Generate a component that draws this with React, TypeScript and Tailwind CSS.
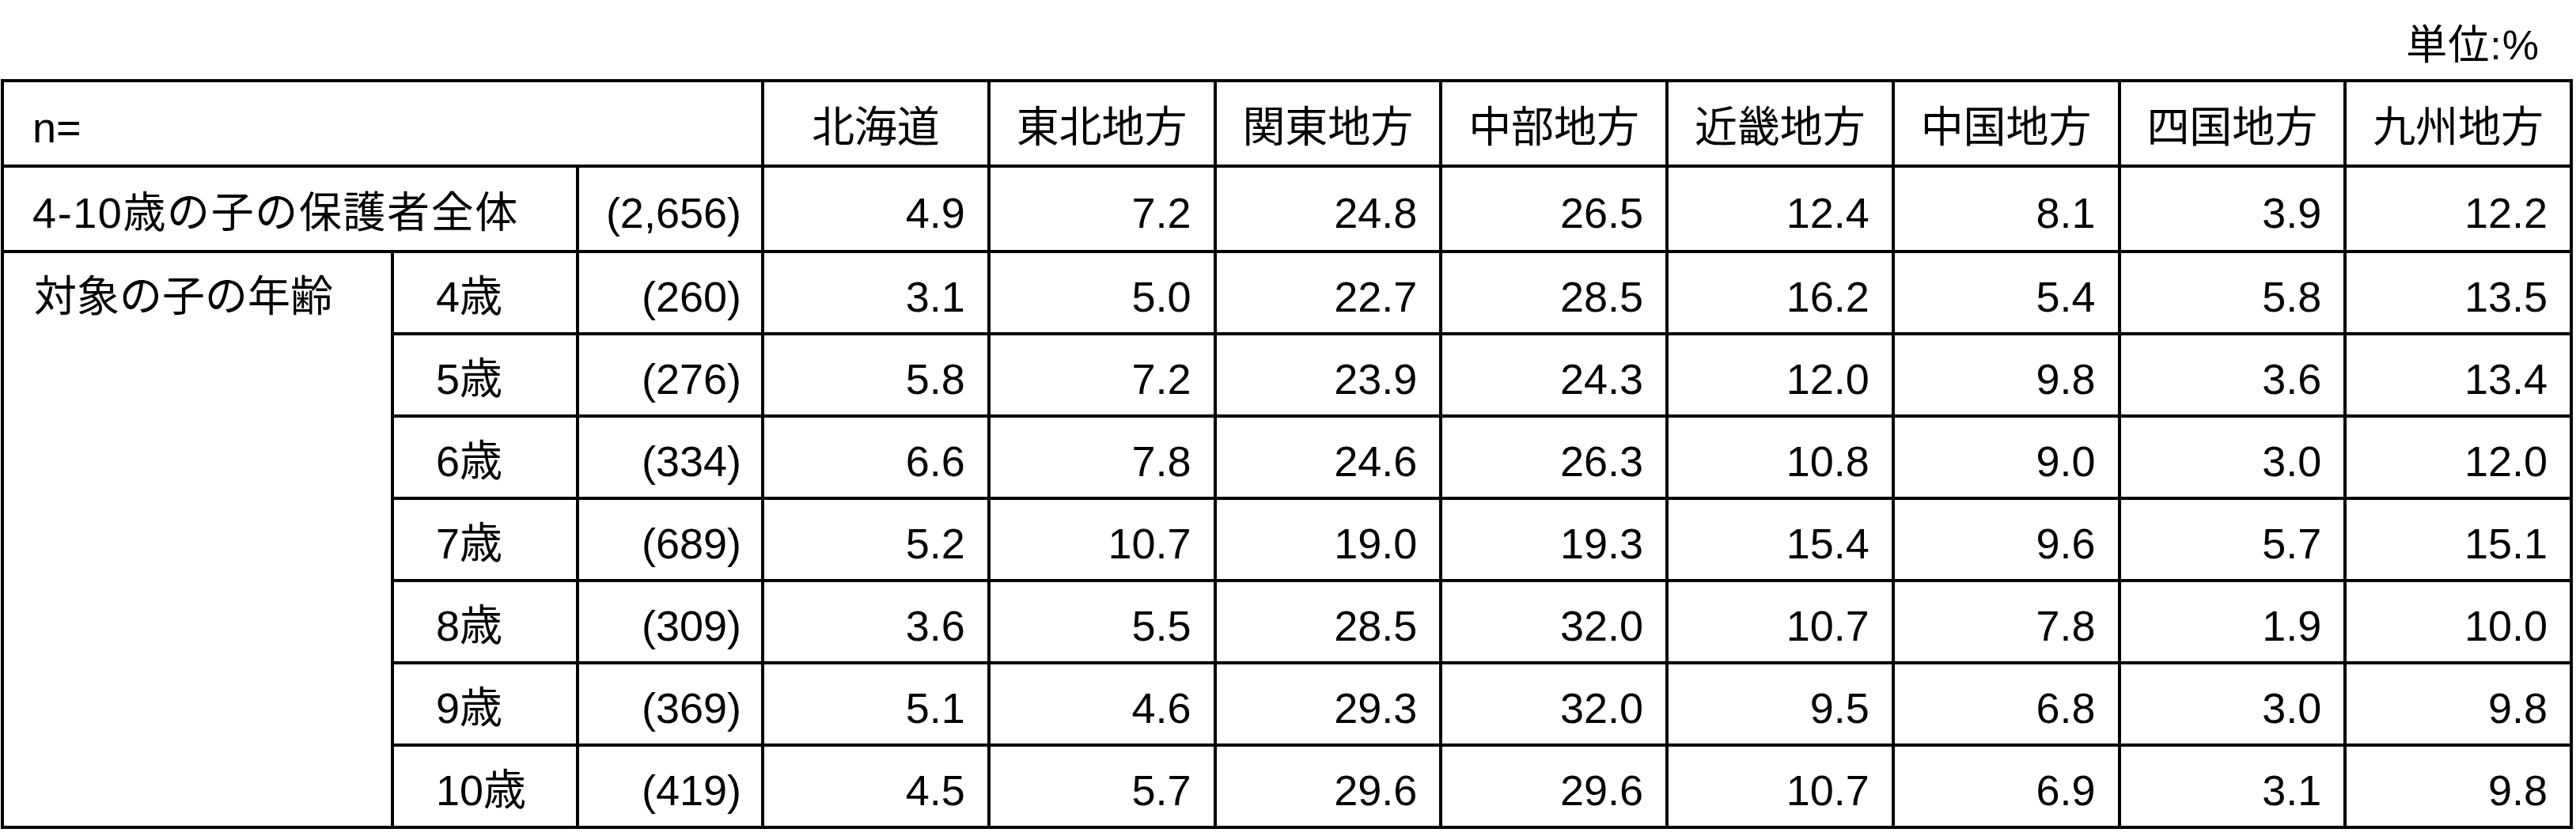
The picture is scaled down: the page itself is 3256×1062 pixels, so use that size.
const regions = [
  "北海道",
  "東北地方",
  "関東地方",
  "中部地方",
  "近畿地方",
  "中国地方",
  "四国地方",
  "九州地方",
]

const total = {
  n: "(2,656)",
  values: ["4.9", "7.2", "24.8", "26.5", "12.4", "8.1", "3.9", "12.2"],
}

const byAge = [
  { age: "4歳", n: "(260)", values: ["3.1", "5.0", "22.7", "28.5", "16.2", "5.4", "5.8", "13.5"] },
  { age: "5歳", n: "(276)", values: ["5.8", "7.2", "23.9", "24.3", "12.0", "9.8", "3.6", "13.4"] },
  { age: "6歳", n: "(334)", values: ["6.6", "7.8", "24.6", "26.3", "10.8", "9.0", "3.0", "12.0"] },
  { age: "7歳", n: "(689)", values: ["5.2", "10.7", "19.0", "19.3", "15.4", "9.6", "5.7", "15.1"] },
  { age: "8歳", n: "(309)", values: ["3.6", "5.5", "28.5", "32.0", "10.7", "7.8", "1.9", "10.0"] },
  { age: "9歳", n: "(369)", values: ["5.1", "4.6", "29.3", "32.0", "9.5", "6.8", "3.0", "9.8"] },
  { age: "10歳", n: "(419)", values: ["4.5", "5.7", "29.6", "29.6", "10.7", "6.9", "3.1", "9.8"] },
]

function NumCell({ children }: { children: React.ReactNode }) {
  return (
    <div className="flex items-center justify-end bg-white pt-[9px] pr-[28px]">
      {children}
    </div>
  )
}

export default function App() {
  return (
    <div className="min-h-[1062px] bg-white font-['Liberation_Sans','Noto_Sans_CJK_JP',sans-serif] text-black">
      {/* unit label */}
      <div className="h-[100px] pt-[31px] pr-[46px] text-right text-[52px] leading-[52px] tracking-[1px]">
        単位:%
      </div>

      {/* table: black background + gaps draw the rules */}
      <div className="ml-[1px] grid w-fit grid-cols-[489px_230px_230px_repeat(8,281.75px)] grid-rows-[104px_104px_repeat(7,100px)] gap-[4px] bg-black p-[4px] text-[54px] leading-[54px]">
        {/* header */}
        <div className="col-span-3 flex items-center bg-white pt-[9px] pl-[36px]">
          n=
        </div>
        {regions.map((r) => (
          <div
            key={r}
            className="flex items-center justify-center bg-white pt-[9px]"
          >
            {r}
          </div>
        ))}

        {/* all parents */}
        <div className="col-span-2 flex items-center bg-white pt-[9px] pl-[36px] tracking-[1.6px]">
          4-10歳の子の保護者全体
        </div>
        <div className="flex items-center justify-end bg-white pt-[9px] pr-[25px]">
          {total.n}
        </div>
        {total.values.map((v, i) => (
          <NumCell key={i}>{v}</NumCell>
        ))}

        {/* by age */}
        <div className="row-span-7 bg-white">
          <div className="flex h-[100px] items-center pt-[9px] pl-[38px]">
            対象の子の年齢
          </div>
        </div>
        {byAge.map((row) => (
          <>
            <div
              key={row.age}
              className="flex items-center bg-white pt-[9px] pl-[53px]"
            >
              {row.age}
            </div>
            <div className="flex items-center justify-end bg-white pt-[9px] pr-[25px]">
              {row.n}
            </div>
            {row.values.map((v, i) => (
              <NumCell key={i}>{v}</NumCell>
            ))}
          </>
        ))}
      </div>
    </div>
  )
}
